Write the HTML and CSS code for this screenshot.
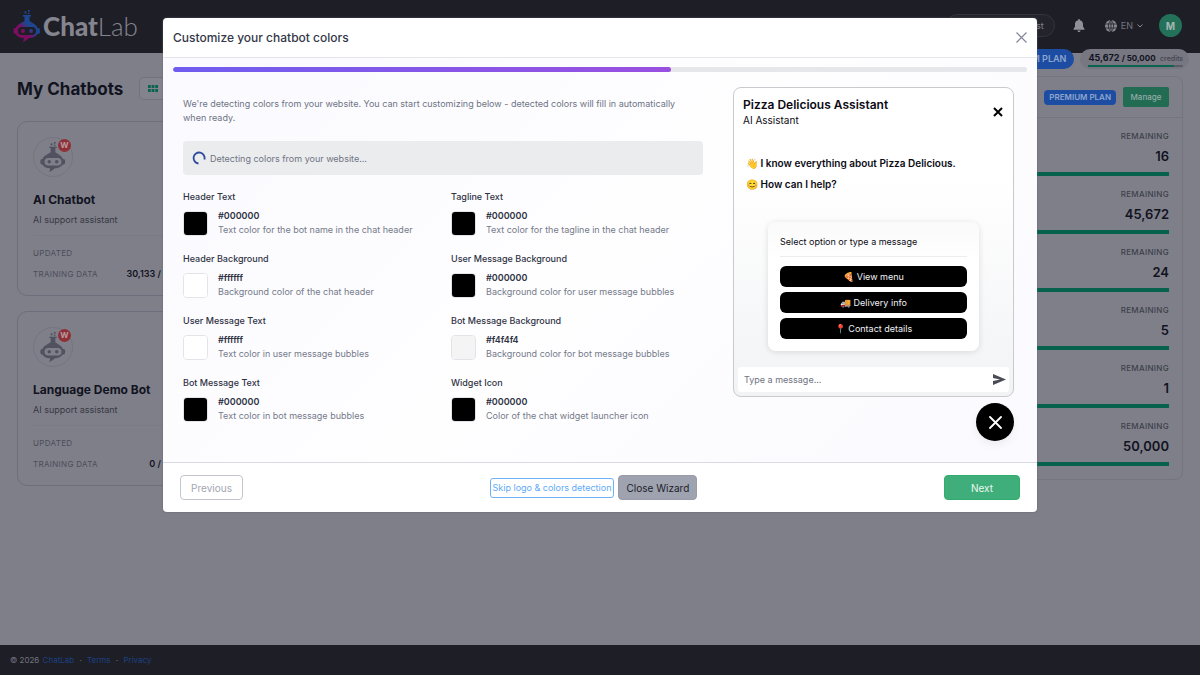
FILE: index.html
```html
<!DOCTYPE html>
<html lang="en">
<head>
    <meta charset="UTF-8">
    <meta name="viewport" content="width=device-width, initial-scale=1.0">
    <title>ChatLab - My Chatbots</title>
    <link rel="stylesheet" href="styles.css">
</head>
<body>
    <svg width="0" height="0" class="sprite" aria-hidden="true">
        <symbol id="robot" viewBox="0 0 28 32">
            <path d="M10 5h8v1.500h-1.500v4.500l4 2.500c2 1.200 3.500 2.800 4 4.500h.7c1.300 0 1.800 1.200 1.800 2.800s-.5 3.200-1.800 3.200h-.9c-1.200 2.600-4.500 4-8.600 4.200-1.500 1.400-3.500 3-6 3.800 1-1.200 1.300-2.500 1-3.900-4-.2-6.800-1.600-7.900-4.100h-.9C.9 24 .5 22.500.5 21s.4-3 1.500-3h.9C3.500 16 5.500 14.200 8 13l3.500-2V6.500H10z"/>
            <rect x="5" y="17" width="18" height="8" rx="4" class="robot-visor"/>
            <circle cx="10" cy="21" r="1.900"/>
            <circle cx="18" cy="21" r="1.900"/>
            <rect x="11.500" y="1.500" width="2" height="2"/>
            <rect x="15" y="0" width="1.800" height="1.800"/>
            <rect x="15" y="2.800" width="1.500" height="1.500"/>
        </symbol>
    </svg>

    <header class="topbar">
        <a href="#" class="logo">
            <svg class="logo-icon" width="28" height="32" viewBox="0 0 28 32">
                <defs>
                    <linearGradient id="logoFill" gradientUnits="userSpaceOnUse" x1="6" y1="26" x2="20" y2="12">
                        <stop offset="0.350" stop-color="#7d0d61"/>
                        <stop offset="0.700" stop-color="#1e4590"/>
                    </linearGradient>
                </defs>
                <use href="#robot" fill="url(#logoFill)"/>
            </svg>
            <span class="logo-text"><b>Chat</b>Lab</span>
        </a>
        <nav class="topbar-right">
            <a href="#" class="request">New feature request</a>
            <button class="icon-btn" aria-label="Notifications">
                <svg width="12" height="13" viewBox="0 0 12 13" fill="#90909a">
                    <path d="M6 0c.6 0 .9.4.9.9v.4C8.800 1.700 10 3.200 10 5v2.500L11.500 10v.7H.5V10L2 7.500V5c0-1.800 1.200-3.300 3.100-3.700V.9C5.100.4 5.400 0 6 0zM4.500 11.400h3C7.400 12.300 6.800 13 6 13s-1.400-.7-1.500-1.600z"/>
                </svg>
            </button>
            <button class="lang">
                <svg width="12" height="12" viewBox="0 0 12 12">
                    <circle cx="6" cy="6" r="6" fill="#8a8a94"/>
                    <path d="M0 4h12M0 8h12M6 0v12M6 0C2.500 3.500 2.500 8.500 6 12M6 0c3.500 3.500 3.500 8.500 0 12" fill="none" stroke="#1e1e27" stroke-width="0.800"/>
                </svg>
                EN
                <svg width="6" height="4" viewBox="0 0 6 4"><path d="M.5.5 3 3 5.500.5" fill="none" stroke="#8a8a94"/></svg>
            </button>
            <button class="avatar">M</button>
        </nav>
    </header>

    <div class="account">
        <span class="plan-pill">PREMIUM PLAN</span>
        <div class="credits">
            <b>45,672 <small>/ 50,000</small></b> <span>credits</span>
            <div class="credits-bar"><i></i></div>
        </div>
    </div>

    <main class="dashboard">
        <section class="bots">
            <div class="bots-head">
                <h1>My Chatbots</h1>
                <button class="view-toggle" aria-label="Grid view">
                    <svg width="10" height="8" viewBox="0 0 10 8" fill="#0c6450">
                        <path d="M0 0h2.800v3H0zM3.600 0h2.800v3H3.600zM7.200 0H10v3H7.200zM0 4h2.800v3H0zM3.600 4h2.800v3H3.600zM7.200 4H10v3H7.200z"/>
                    </svg>
                </button>
            </div>
            <article class="bot-card">
                <div class="bot-top">
                    <div class="bot-avatar">
                        <svg width="28" height="30" fill="#50525f"><use href="#robot"/></svg>
                        <span class="bot-badge">W</span>
                    </div>
                    <span class="bot-status">Active</span>
                </div>
                <h2>AI Chatbot</h2>
                <p>AI support assistant</p>
                <dl>
                    <div><dt>Updated</dt></div>
                    <div><dt>Training data</dt><dd>30,133 / 100,000</dd></div>
                </dl>
            </article>
            <article class="bot-card">
                <div class="bot-top">
                    <div class="bot-avatar">
                        <svg width="28" height="30" fill="#50525f"><use href="#robot"/></svg>
                        <span class="bot-badge">W</span>
                    </div>
                    <span class="bot-status">Active</span>
                </div>
                <h2>Language Demo Bot</h2>
                <p>AI support assistant</p>
                <dl>
                    <div><dt>Updated</dt></div>
                    <div><dt>Training data</dt><dd>0 / 100,000</dd></div>
                </dl>
            </article>
        </section>

        <aside class="usage">
            <div class="usage-head">
                <span class="plan-tag">PREMIUM PLAN</span>
                <button class="manage">Manage</button>
            </div>
            <ul>
                <li><span>Remaining</span><b>16</b></li>
                <li><span>Remaining</span><b>45,672</b></li>
                <li><span>Remaining</span><b>24</b></li>
                <li><span>Remaining</span><b>5</b></li>
                <li><span>Remaining</span><b>1</b></li>
                <li><span>Remaining</span><b>50,000</b></li>
            </ul>
        </aside>
    </main>

    <footer class="page-footer">
        <span>© 2026</span> <a href="#">ChatLab</a> <i>·</i> <a href="#">Terms</a> <i>·</i> <a href="#">Privacy</a>
    </footer>

    <!-- Setup wizard -->
    <div class="overlay">
        <div class="modal" role="dialog" aria-labelledby="wizardTitle">
            <div class="modal-header">
                <h2 id="wizardTitle">Customize your chatbot colors</h2>
                <button class="modal-close" aria-label="Close">
                    <svg width="11" height="11" viewBox="0 0 11 11"><path d="M.5.5l10 10M10.500.5l-10 10" stroke="#84879a" stroke-width="1.200"/></svg>
                </button>
            </div>

            <div class="modal-body">
                <div class="progress"><div class="progress-fill"></div></div>
                <div class="wizard">
                    <form class="wizard-form">
                        <p class="intro">We're detecting colors from your website. You can start customizing below - detected colors will fill in automatically when ready.</p>
                        <div class="detecting">
                            <svg width="14" height="14" viewBox="0 0 14 14"><path d="M6.500 12.500A5.500 5.500 0 1 1 12.400 8.500" fill="none" stroke="#2f4b9b" stroke-width="1.800"/></svg>
                            Detecting colors from your website...
                        </div>
                        <div class="colors">
                            <div class="field">
                                <label for="headerText">Header Text</label>
                                <div class="pick">
                                    <input type="color" id="headerText" value="#000000">
                                    <div><code>#000000</code><p>Text color for the bot name in the chat header</p></div>
                                </div>
                            </div>
                            <div class="field">
                                <label for="taglineText">Tagline Text</label>
                                <div class="pick">
                                    <input type="color" id="taglineText" value="#000000">
                                    <div><code>#000000</code><p>Text color for the tagline in the chat header</p></div>
                                </div>
                            </div>
                            <div class="field">
                                <label for="headerBg">Header Background</label>
                                <div class="pick">
                                    <input type="color" id="headerBg" value="#ffffff">
                                    <div><code>#ffffff</code><p>Background color of the chat header</p></div>
                                </div>
                            </div>
                            <div class="field">
                                <label for="userBg">User Message Background</label>
                                <div class="pick">
                                    <input type="color" id="userBg" value="#000000">
                                    <div><code>#000000</code><p>Background color for user message bubbles</p></div>
                                </div>
                            </div>
                            <div class="field">
                                <label for="userText">User Message Text</label>
                                <div class="pick">
                                    <input type="color" id="userText" value="#ffffff">
                                    <div><code>#ffffff</code><p>Text color in user message bubbles</p></div>
                                </div>
                            </div>
                            <div class="field">
                                <label for="botBg">Bot Message Background</label>
                                <div class="pick">
                                    <input type="color" id="botBg" value="#f4f4f4">
                                    <div><code>#f4f4f4</code><p>Background color for bot message bubbles</p></div>
                                </div>
                            </div>
                            <div class="field">
                                <label for="botText">Bot Message Text</label>
                                <div class="pick">
                                    <input type="color" id="botText" value="#000000">
                                    <div><code>#000000</code><p>Text color in bot message bubbles</p></div>
                                </div>
                            </div>
                            <div class="field">
                                <label for="widgetIcon">Widget Icon</label>
                                <div class="pick">
                                    <input type="color" id="widgetIcon" value="#000000">
                                    <div><code>#000000</code><p>Color of the chat widget launcher icon</p></div>
                                </div>
                            </div>
                        </div>
                    </form>

                    <div class="preview">
                        <div class="chat">
                            <div class="chat-header">
                                <div>
                                    <h3>Pizza Delicious Assistant</h3>
                                    <p>AI Assistant</p>
                                </div>
                                <button class="chat-close" aria-label="Close chat">
                                    <svg width="10" height="10" viewBox="0 0 10 10"><path d="M1 1l8 8M9 1L1 9" stroke="#000" stroke-width="2"/></svg>
                                </button>
                            </div>
                            <div class="chat-greeting">
                                <p>👋 I know everything about Pizza Delicious.</p>
                                <p>😊 How can I help?</p>
                            </div>
                            <div class="options">
                                <p>Select option or type a message</p>
                                <button>🍕 View menu</button>
                                <button>🚚 Delivery info</button>
                                <button>📍 Contact details</button>
                            </div>
                            <div class="chat-input">
                                <input type="text" placeholder="Type a message..." aria-label="Message">
                                <button aria-label="Send">
                                    <svg width="13" height="11" viewBox="0 0 13 11"><path d="M0 0l13 5.500L0 11V7l7-1.500L0 4z" fill="#4b4b58"/></svg>
                                </button>
                            </div>
                        </div>
                        <button class="launcher" aria-label="Toggle chat">
                            <svg width="13" height="13" viewBox="0 0 13 13"><path d="M1 1l11 11M12 1L1 12" stroke="#fff" stroke-width="1.800" stroke-linecap="round"/></svg>
                        </button>
                    </div>
                </div>
            </div>

            <div class="modal-footer">
                <button class="btn btn-prev">Previous</button>
                <div class="footer-mid">
                    <button class="btn btn-skip">Skip logo &amp; colors detection</button>
                    <button class="btn btn-wizard">Close Wizard</button>
                </div>
                <button class="btn btn-next">Next</button>
            </div>
        </div>
    </div>
</body>
</html>
```
FILE: styles.css
```css
* {
    box-sizing: border-box;
}

body {
    --visor: #1e1e27;
    margin: 0;
    min-height: 100vh;
    display: flex;
    flex-direction: column;
    background: #7f7f89;
    font-family: Inter, sans-serif;
    font-size: 9px;
    color: #11131f;
}

h1, h2, h3, p, ul, dl, dd {
    margin: 0;
    padding: 0;
}

button {
    font-family: inherit;
    padding: 0;
    border: none;
    background: none;
    cursor: pointer;
}

a {
    text-decoration: none;
}

svg {
    flex: none;
}

.sprite {
    position: absolute;
}

.robot-visor {
    fill: var(--visor);
}

/* Top bar */
.topbar {
    height: 53px;
    padding: 0 18px 2px 13px;
    display: flex;
    align-items: center;
    justify-content: space-between;
    background: #1e1e27;
}

.logo {
    display: flex;
    align-items: center;
    gap: 2px;
    color: #85858f;
}

.logo-text {
    font-family: Lato, sans-serif;
    font-size: 26px;
    font-weight: 300;
    line-height: 32px;
}

.logo-text b {
    font-weight: 900;
}

.topbar-right {
    display: flex;
    align-items: center;
}

.request {
    height: 23px;
    margin-right: 18px;
    padding: 0 10px;
    border: 1px solid #34343e;
    border-radius: 12px;
    background: #23232b;
    color: #85858f;
    line-height: 21px;
}

.icon-btn {
    display: flex;
    margin-right: 20px;
}

.lang {
    display: flex;
    align-items: center;
    gap: 4px;
    margin-right: 16px;
    color: #74747f;
    font-size: 9px;
}

.avatar {
    width: 23px;
    height: 23px;
    border-radius: 50%;
    background: #24715a;
    color: #a5b5b2;
    font-size: 10px;
    font-weight: 700;
}

/* Plan and credits, hanging over the edge of the top bar */
.account {
    display: flex;
    justify-content: flex-end;
    align-items: flex-start;
    gap: 6px;
    height: 20px;
    margin-top: -4px;
    padding-right: 11px;
}

.plan-pill {
    padding: 0 8px;
    border-radius: 10px;
    background: #1c4da2;
    color: #8ea5cf;
    font-size: 9px;
    font-weight: 600;
    line-height: 20px;
}

.credits {
    padding: 3px 6px 2px 8px;
    border-radius: 10px;
    background: #777782;
    line-height: 12px;
    white-space: nowrap;
}

.credits b {
    font-size: 9px;
}

.credits small {
    font-size: 8px;
}

.credits span {
    margin-left: 2px;
    color: #42444f;
    font-size: 7px;
    font-weight: 500;
}

.credits-bar {
    height: 2px;
    border-radius: 1px;
    background: #5b5c68;
}

.credits-bar i {
    display: block;
    width: 91%;
    height: 2px;
    background: #0c6450;
}

/* Dashboard */
.dashboard {
    flex: 1;
    display: flex;
    justify-content: space-between;
    align-items: flex-start;
    padding: 7px 17px;
}

.bots {
    width: 198px;
}

.bots-head {
    display: flex;
    align-items: center;
    gap: 16px;
    height: 25px;
    margin-bottom: 20px;
}

.bots-head h1 {
    font-size: 17px;
    font-weight: 700;
    white-space: nowrap;
}

.view-toggle {
    flex: none;
    display: flex;
    align-items: center;
    justify-content: center;
    width: 28px;
    height: 23px;
    border: 1px solid #71727d;
    border-radius: 5px;
    background: #83838d;
}

.bot-card {
    height: 175px;
    margin-bottom: 15px;
    padding: 15px;
    border: 1px solid #6c6e7b;
    border-radius: 10px;
}

.bot-top {
    display: flex;
    justify-content: space-between;
    align-items: flex-start;
    margin-bottom: 14px;
}

.bot-avatar {
    --visor: #7f7f89;
    position: relative;
    display: flex;
    align-items: center;
    justify-content: center;
    width: 40px;
    height: 40px;
    border: 1px solid #747580;
    border-radius: 50%;
}

.bot-badge {
    position: absolute;
    top: 1px;
    right: 1px;
    width: 13px;
    height: 13px;
    border-radius: 50%;
    background: #8f3036;
    color: #b59da1;
    font-size: 8px;
    font-weight: 700;
    line-height: 13px;
    text-align: center;
}

.bot-status {
    padding: 0 6px;
    border-radius: 3px;
    background: #747580;
    font-size: 8px;
    line-height: 12px;
}

.bot-card h2 {
    margin-bottom: 4px;
    font-size: 12px;
    font-weight: 700;
    line-height: 18px;
    white-space: nowrap;
}

.bot-card p {
    padding-bottom: 8px;
    border-bottom: 1px solid #797a85;
    color: #363843;
    line-height: 14px;
}

.bot-card dl {
    padding-top: 11px;
}

.bot-card dl div {
    display: flex;
    justify-content: space-between;
    line-height: 12px;
    margin-bottom: 9px;
}

.bot-card dt {
    color: #4b4d59;
    font-size: 8px;
    letter-spacing: 0.04em;
    text-transform: uppercase;
}

.bot-card dd {
    font-weight: 600;
}

.usage {
    width: 360px;
    border: 1px solid #74757f;
    border-radius: 8px;
}

.usage-head {
    display: flex;
    justify-content: flex-end;
    align-items: center;
    gap: 7px;
    height: 41px;
    padding-right: 13px;
    border-bottom: 1px solid #74757f;
}

.plan-tag {
    padding: 0 5px;
    border-radius: 4px;
    background: #1c4da2;
    color: #8ea5cf;
    font-size: 8px;
    font-weight: 600;
    line-height: 15px;
}

.manage {
    width: 46px;
    height: 20px;
    border-radius: 2px;
    background: #226c54;
    color: #93aba7;
    font-size: 8px;
    font-weight: 500;
}

.usage ul {
    padding: 10px 13px 13px;
    list-style: none;
}

.usage li {
    display: flex;
    flex-direction: column;
    align-items: flex-end;
    height: 48px;
    margin-bottom: 10px;
    border-bottom: 4px solid #07624d;
}

.usage li:last-child {
    margin-bottom: 0;
}

.usage li span {
    color: #3c3f4b;
    font-size: 8px;
    font-weight: 500;
    letter-spacing: 0.04em;
    line-height: 16px;
    text-transform: uppercase;
}

.usage li b {
    font-size: 13px;
    font-weight: 600;
    line-height: 24px;
}

.page-footer {
    height: 30px;
    padding: 0 10px;
    background: #1e1e27;
    color: #72737e;
    font-size: 8px;
    line-height: 30px;
}

.page-footer a {
    color: #1c4182;
}

.page-footer span {
    margin-right: 1px;
}

.page-footer i {
    margin: 0 3px;
}

/* Wizard modal */
.overlay {
    position: absolute;
    inset: 0;
    padding: 18px 16px;
}

.modal {
    max-width: 874px;
    margin: 0 auto;
    border-radius: 4px;
    background: #fff;
    overflow: hidden;
    box-shadow: 0 0 2px #5f6070;
}

.modal-header {
    display: flex;
    align-items: center;
    justify-content: space-between;
    height: 40px;
    padding: 0 10px;
    border-bottom: 1px solid #e5e6eb;
}

.modal-header h2 {
    color: #343748;
    font-size: 12px;
    font-weight: 500;
}

.modal-close {
    display: flex;
}

.modal-body {
    padding: 9px 10px 21px;
    background: linear-gradient(135deg, #fafaff, #fefeff 50%, #fafaff);
    border-bottom: 1px solid #d9dae3;
}

.progress {
    height: 5px;
    border-radius: 3px;
    background: #e6e7ea;
    overflow: hidden;
}

.progress-fill {
    width: 58.3%;
    height: 5px;
    border-radius: 3px;
    background: linear-gradient(90deg, #6f5df0, #9950e0);
}

.wizard {
    display: flex;
    gap: 30px;
    padding: 15px 13px 0 10px;
}

.wizard-form {
    flex: 1;
    padding-top: 10px;
}

.intro {
    margin-bottom: 16px;
    padding-right: 10px;
    color: #6f7484;
    line-height: 14px;
}

.detecting {
    display: flex;
    align-items: center;
    gap: 4px;
    height: 34px;
    margin-bottom: 14px;
    padding: 0 9px;
    border-radius: 4px;
    background: #ebecee;
    color: #6f7484;
}

.colors {
    display: grid;
    grid-template-columns: 1fr 1fr;
    gap: 14px 16px;
}

.field label {
    display: block;
    margin-bottom: 4px;
    color: #303344;
    font-weight: 500;
    line-height: 16px;
}

.pick {
    display: flex;
    align-items: center;
    gap: 10px;
    white-space: nowrap;
}

.pick input {
    flex: none;
    width: 25px;
    height: 25px;
    padding: 0;
    border: 1px solid #e3e4ea;
    border-radius: 4px;
    background: none;
    overflow: hidden;
    appearance: none;
}

.pick input::-webkit-color-swatch-wrapper {
    padding: 0;
}

.pick input::-webkit-color-swatch {
    border: none;
}

.pick code {
    display: block;
    color: #303344;
    font-family: inherit;
    font-size: 9px;
    font-weight: 600;
    line-height: 14px;
}

.pick p {
    color: #757a89;
    line-height: 14px;
}

/* Chat preview */
.preview {
    flex: none;
    display: flex;
    flex-direction: column;
    align-items: flex-end;
    gap: 6px;
    width: 281px;
}

.chat {
    width: 100%;
    padding: 0 4px 4px;
    border: 1px solid #c9cace;
    border-radius: 8px;
    background: linear-gradient(#fff 30%, #f2f3f5);
    color: #0b0b14;
}

.chat-header {
    display: flex;
    align-items: center;
    justify-content: space-between;
    padding: 8px 6px 0 5px;
}

.chat-header h3 {
    font-size: 12px;
    font-weight: 600;
    line-height: 17px;
}

.chat-header p {
    font-size: 10px;
    line-height: 14px;
}

.chat-close {
    display: flex;
}

.chat-greeting {
    padding: 26px 8px 27px;
    font-size: 10px;
    font-weight: 600;
    line-height: 21px;
}

.options {
    display: flex;
    flex-direction: column;
    gap: 5px;
    margin: 0 30px 16px;
    padding: 12px;
    border-radius: 8px;
    background: linear-gradient(#fafafa, #fff 30%);
    box-shadow: 0 1px 6px rgba(0, 0, 0, 0.12);
}

.options p {
    margin-bottom: 4px;
    padding-bottom: 6px;
    border-bottom: 1px solid #ededf0;
    line-height: 16px;
}

.options button {
    height: 21px;
    border-radius: 6px;
    background: #000;
    color: #f1f1f5;
    font-size: 9px;
}

.chat-input {
    display: flex;
    align-items: center;
    height: 25px;
    padding: 0 3px 0 6px;
    border-radius: 3px;
    background: #fff;
}

.chat-input input {
    flex: 1;
    min-width: 0;
    padding: 0;
    border: none;
    outline: none;
    font-family: inherit;
    font-size: 9px;
}

.chat-input input::placeholder {
    color: #6f7280;
}

.chat-input button {
    display: flex;
}

.launcher {
    display: flex;
    align-items: center;
    justify-content: center;
    width: 38px;
    height: 38px;
    border-radius: 50%;
    background: #000;
    box-shadow: 0 4px 8px rgba(0, 0, 0, 0.06);
}

.modal-footer {
    display: flex;
    align-items: center;
    justify-content: space-between;
    padding: 12px 17px;
}

.footer-mid {
    display: flex;
    align-items: center;
    gap: 4px;
}

.btn {
    height: 25px;
    border: 1px solid;
    border-radius: 4px;
    font-size: 10px;
}

.btn-prev {
    width: 63px;
    border-color: #c3c5cd;
    color: #a3a6b1;
}

.btn-skip {
    height: 20px;
    padding: 0 2px;
    border-color: #6cb2f8;
    border-radius: 3px;
    color: #5eaaf7;
    font-size: 9px;
}

.btn-wizard {
    width: 79px;
    border-color: #999ca8;
    background: #9fa2af;
    color: #1c1e2c;
}

.btn-next {
    width: 76px;
    border-color: #30ad6c;
    background: #3fae7b;
    color: #ecf8f1;
}
```
